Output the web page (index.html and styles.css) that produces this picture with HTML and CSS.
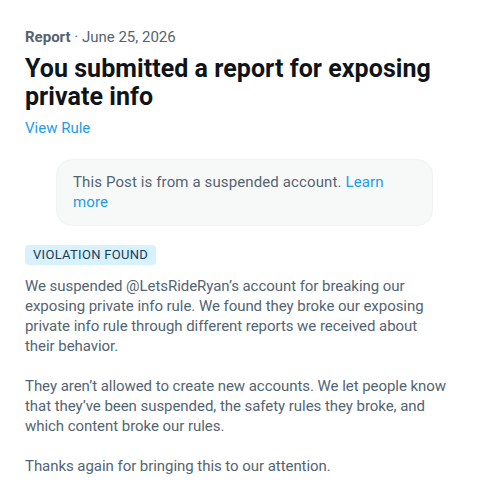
FILE: index.html
```html
<!DOCTYPE html>
<html>
<head>
<meta charset="utf-8">
<link rel="stylesheet" href="styles.css">
</head>
<body>
<main class="report">
  <div class="meta"><span class="meta-kind">Report</span> · June 25, 2026</div>
  <h1 class="title">You submitted a report for exposing private info</h1>
  <a class="link rule-link" href="#">View Rule</a>
  <div class="notice">This Post is from a suspended account. <a class="link" href="#">Learn more</a></div>
  <span class="badge">VIOLATION FOUND</span>
  <div class="body">
    <p>We suspended @LetsRideRyan’s account for breaking our<br>exposing private info rule. We found they broke our exposing<br>private info rule through different reports we received about<br>their behavior.</p>
    <p>They aren’t allowed to create new accounts. We let people know<br>that they’ve been suspended, the safety rules they broke, and<br>which content broke our rules.</p>
    <p>Thanks again for bringing this to our attention.</p>
  </div>
</main>
</body>
</html>
```
FILE: styles.css
```css
html, body { margin: 0; padding: 0; background: #fff; }
body { font-family: Roboto, "Noto Sans", sans-serif; color: #536471; }
.report { padding: 27px 25px 0 25px; display: flex; flex-direction: column; align-items: flex-start; }
.meta { font-size: 15px; line-height: 20px; color: #536471; }
.meta-kind { font-weight: 700; }
.title { margin: 8px 0 0 0; font-size: 25px; line-height: 28px; font-weight: 700; color: #0f1419; letter-spacing: 0.05px; }
.link { color: #1d9bf0; text-decoration: none; }
.rule-link { font-size: 15px; line-height: 20px; margin-top: 7px; }
.notice { margin: 21px 0 0 31px; width: 377px; box-sizing: border-box; padding: 12px 16px 13px 16px; background: #f7f9f9; border: 1px solid #f1f3f4; border-radius: 16px; font-size: 15px; line-height: 20px; color: #536471; letter-spacing: 0.12px; }
.badge { margin-top: 19px; background: #d7f1fd; color: #1b3b5c; font-size: 13px; line-height: 20px; padding: 0 8px; border-radius: 4px; letter-spacing: 0.3px; }
.body { margin-top: 11px; font-size: 15px; line-height: 20px; color: #536471; width: 450px; letter-spacing: -0.05px; }
.body p { margin: 0 0 20px 0; }
```
